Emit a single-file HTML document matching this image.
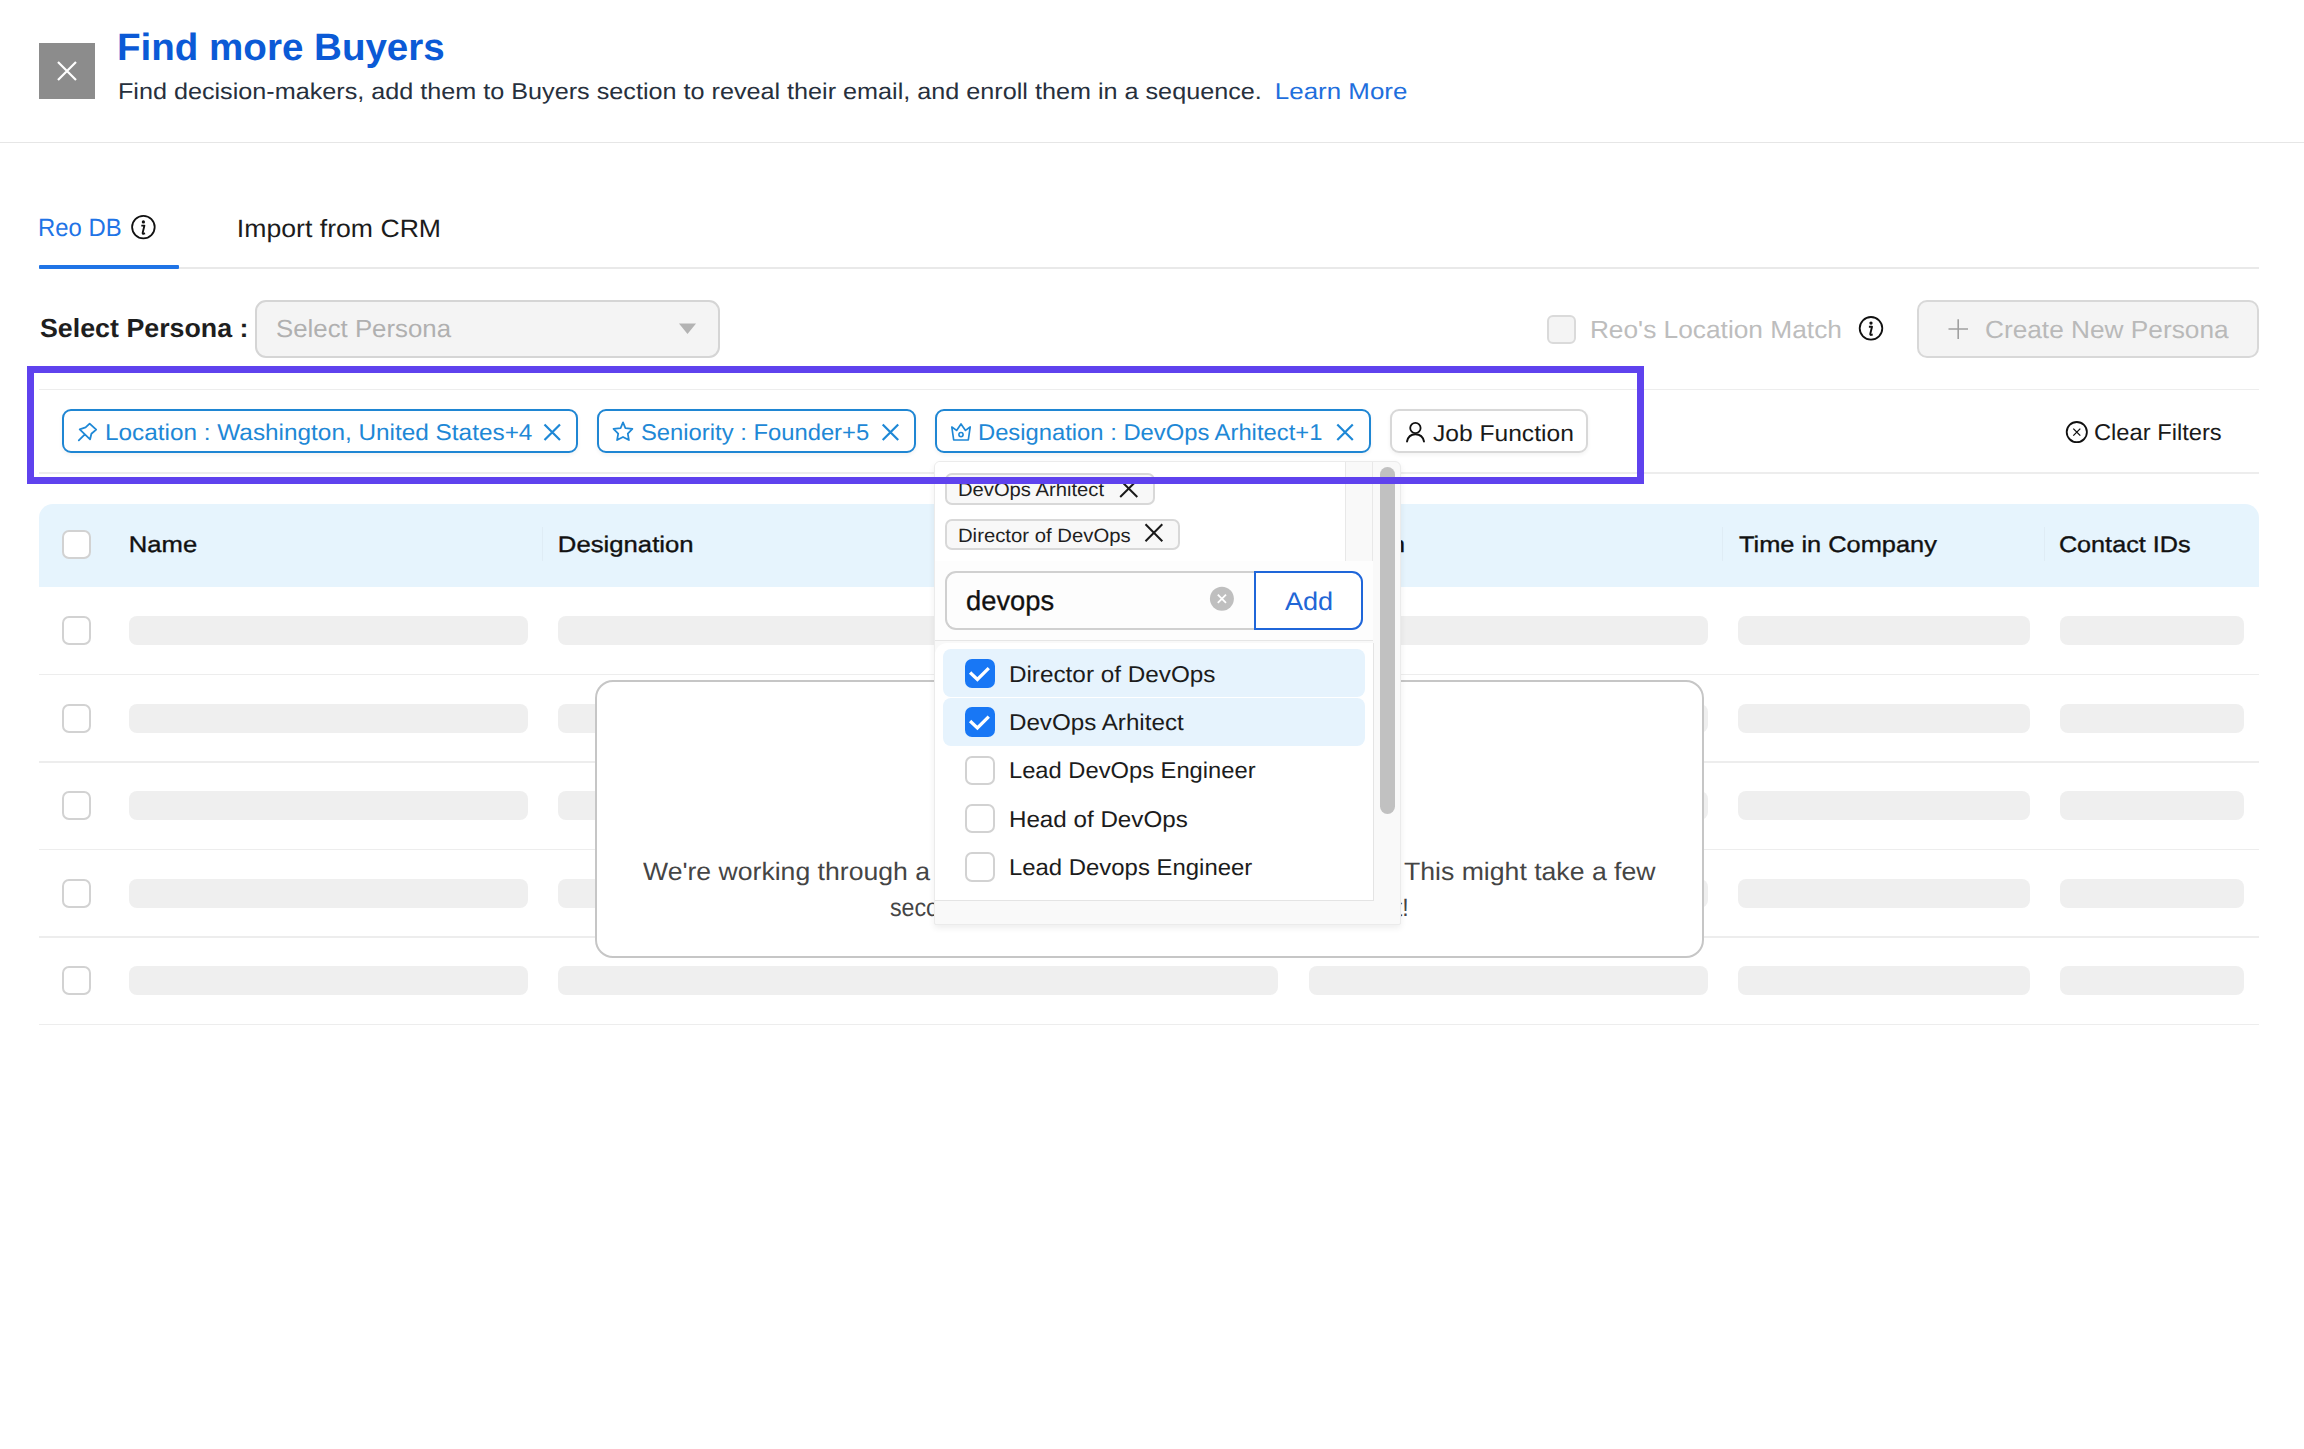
<!DOCTYPE html>
<html>
<head>
<meta charset="utf-8">
<style>
html,body{margin:0;padding:0;background:#ffffff;}
body{width:2304px;height:1449px;overflow:hidden;position:relative;font-family:"Liberation Sans",sans-serif;}
.a{position:absolute;box-sizing:border-box;}
.t{position:absolute;white-space:nowrap;font-family:"Liberation Sans",sans-serif;text-rendering:geometricPrecision;}
svg{position:absolute;overflow:visible;}
.sk{position:absolute;height:29px;border-radius:8px;background:#efefef;}
.cb{position:absolute;width:29px;height:29px;box-sizing:border-box;border:2px solid #d2d2d2;border-radius:7px;background:#fff;}
.rl{position:absolute;left:39px;width:2220px;height:2px;background:#ededed;}
.chip{position:absolute;top:409px;height:44px;box-sizing:border-box;border:2px solid #1f86d3;border-radius:9px;background:#fff;box-shadow:0 2px 4px rgba(0,0,0,0.05);}
</style>
</head>
<body>

<!-- ===== Header ===== -->
<div class="a" style="left:39px;top:43px;width:56px;height:56px;background:#8c8c8c;"></div>
<svg style="left:0;top:0" width="2304" height="120">
  <path d="M58 62 L76 80 M76 62 L58 80" stroke="#ffffff" stroke-width="2.2" fill="none"/>
</svg>
<div class="t" style="left:117.4px;top:29.0px;font-size:38px;line-height:38px;font-weight:700;color:#0b5ad6;transform-origin:2.00px 0;transform:scaleX(1.0146)">Find more Buyers</div>
<div class="t" style="left:117.7px;top:80.0px;font-size:22.75px;line-height:22.75px;font-weight:400;color:#27303d;transform-origin:1.00px 0;transform:scaleX(1.1072)">Find decision-makers, add them to Buyers section to reveal their email, and enroll them in a sequence.</div>
<div class="t" style="left:1275.4px;top:80.0px;font-size:22.75px;line-height:22.75px;font-weight:400;color:#1f6fdd;transform-origin:1.00px 0;transform:scaleX(1.1388)">Learn More</div>
<div class="a" style="left:0;top:141.5px;width:2304px;height:1.5px;background:#e6e6e6;"></div>

<!-- ===== Tabs ===== -->
<div class="t" style="left:38.1px;top:216.0px;font-size:25px;line-height:25px;font-weight:400;color:#1f74e6;transform-origin:2.00px 0;transform:scaleX(0.9545)">Reo DB</div>
<svg style="left:0;top:0" width="200" height="260">
  <g id="info">
  <circle cx="143.4" cy="227.1" r="11.3" stroke="#111" stroke-width="1.8" fill="none"/>
  <circle cx="143.4" cy="221.9" r="1.65" fill="#111"/>
  <path d="M141.3 225.6 H144.4 L142.7 232.6 Q142.4 233.9 143.7 233.7 L145.1 233.3" stroke="#111" stroke-width="1.9" fill="none" stroke-linejoin="round"/>
  </g>
</svg>
<div class="t" style="left:237.0px;top:217.0px;font-size:25px;line-height:25px;font-weight:400;color:#1c1c1c;transform-origin:2.00px 0;transform:scaleX(1.0652)">Import from CRM</div>
<div class="a" style="left:39px;top:267px;width:2220px;height:1.6px;background:#e9e9e9;"></div>
<div class="a" style="left:39px;top:265px;width:140px;height:4px;background:#1f74e6;border-radius:1px;"></div>

<!-- ===== Persona row ===== -->
<div class="t" style="left:40.2px;top:315.0px;font-size:26.25px;line-height:26.25px;font-weight:700;color:#1e1e1e;transform-origin:0.00px 0;transform:scaleX(1.0207)">Select Persona :</div>
<div class="a" style="left:254.5px;top:299.5px;width:465px;height:58.5px;background:#f4f4f4;border:2px solid #d5d5d5;border-radius:11px;"></div>
<div class="t" style="left:276.2px;top:318.0px;font-size:24.75px;line-height:24.75px;font-weight:400;color:#b0b0b0;transform-origin:1.00px 0;transform:scaleX(1.0432)">Select Persona</div>
<svg style="left:0;top:0" width="800" height="400">
  <polygon points="679,323.5 696,323.5 687.5,334" fill="#b3b3b3"/>
</svg>
<div class="a" style="left:1547px;top:315px;width:29px;height:29px;background:#f4f4f4;border:2px solid #dadada;border-radius:6px;"></div>
<div class="t" style="left:1590.3px;top:319.0px;font-size:24.75px;line-height:24.75px;font-weight:400;color:#bdbdbd;transform-origin:2.00px 0;transform:scaleX(1.0624)">Reo's Location Match</div>
<svg style="left:0;top:0" width="2304" height="400">
  <g transform="translate(1727.6,101.2)">
  <circle cx="143.4" cy="227.1" r="11.3" stroke="#111" stroke-width="1.8" fill="none"/>
  <circle cx="143.4" cy="221.9" r="1.65" fill="#111"/>
  <path d="M141.3 225.6 H144.4 L142.7 232.6 Q142.4 233.9 143.7 233.7 L145.1 233.3" stroke="#111" stroke-width="1.9" fill="none" stroke-linejoin="round"/>
  </g>
</svg>
<div class="a" style="left:1917px;top:299.5px;width:341.5px;height:58.5px;background:#f4f4f4;border:2px solid #d8d8d8;border-radius:10px;"></div>
<svg style="left:0;top:0" width="2304" height="400">
  <path d="M1948.5 329 H1968 M1958.2 319.2 V339" stroke="#a0a0a0" stroke-width="1.6" fill="none"/>
</svg>
<div class="t" style="left:1984.8px;top:319.0px;font-size:24.75px;line-height:24.75px;font-weight:400;color:#b9b9b9;transform-origin:1.00px 0;transform:scaleX(1.0608)">Create New Persona</div>

<!-- ===== Filter row ===== -->
<div class="rl" style="top:388.5px;height:1.5px;"></div>
<div class="rl" style="top:472px;height:1.5px;"></div>

<div class="chip" style="left:62px;width:516px;"></div>
<div class="chip" style="left:597px;width:319px;"></div>
<div class="chip" style="left:935px;width:435.5px;"></div>
<div class="chip" style="left:1390px;width:198px;border-color:#d8d8d8;"></div>

<svg style="left:0;top:0" width="2304" height="480">
  <!-- pin -->
  <path d="M89.65 423.6 L96.2 429.6 L91.4 433.8 L90.1 439.3 L79.7 429.3 L85.6 427.4 Z M84.6 434.6 L78.8 440.3" fill="none" stroke="#1e88d6" stroke-width="1.8" stroke-linejoin="round" stroke-linecap="round"/>
  <!-- X chip1 -->
  <path d="M544.5 424.5 L560 440 M560 424.5 L544.5 440" stroke="#1e88d6" stroke-width="2.2" fill="none"/>
  <!-- star -->
  <polygon points="623,422.4 625.4,428.1 632.4,428.9 627.8,433.6 628.9,440.1 623,436.9 617.1,440.1 618.2,433.6 613.5,428.9 620.6,428.1" fill="none" stroke="#1e88d6" stroke-width="1.75" stroke-linejoin="round"/>
  <!-- X chip2 -->
  <path d="M882.7 424.5 L898.2 440 M898.2 424.5 L882.7 440" stroke="#1e88d6" stroke-width="2.2" fill="none"/>
  <!-- crown -->
  <path d="M951.8 427 L956.6 430.4 L961 424 L965.5 430.4 L970.2 427 L968.3 440 L953.7 440 Z" fill="none" stroke="#1e88d6" stroke-width="1.7" stroke-linejoin="round"/>
  <circle cx="961" cy="434.6" r="2.1" fill="none" stroke="#1e88d6" stroke-width="1.6"/>
  <!-- X chip3 -->
  <path d="M1337.3 424.5 L1352.8 440 M1352.8 424.5 L1337.3 440" stroke="#1e88d6" stroke-width="2.2" fill="none"/>
  <!-- person -->
  <circle cx="1415.4" cy="428" r="5.2" fill="none" stroke="#111" stroke-width="1.8"/>
  <path d="M1407 441.5 C1408 436.5 1411 434.2 1415.4 434.2 C1419.8 434.2 1423 436.5 1424 441.5" fill="none" stroke="#111" stroke-width="1.9" stroke-linecap="round"/>
  <!-- clear filters icon -->
  <circle cx="2076.8" cy="432.1" r="10.1" fill="none" stroke="#111" stroke-width="1.8"/>
  <path d="M2073.3 428.6 L2080.3 435.6 M2080.3 428.6 L2073.3 435.6" stroke="#111" stroke-width="1.3" fill="none"/>
</svg>
<div class="t" style="left:104.9px;top:421.0px;font-size:22.75px;line-height:22.75px;font-weight:400;color:#1e88d6;transform-origin:1.00px 0;transform:scaleX(1.0702)">Location : Washington, United States+4</div>
<div class="t" style="left:640.5px;top:421.0px;font-size:22.75px;line-height:22.75px;font-weight:400;color:#1e88d6;transform-origin:1.00px 0;transform:scaleX(1.0462)">Seniority : Founder+5</div>
<div class="t" style="left:977.9px;top:421.0px;font-size:22.75px;line-height:22.75px;font-weight:400;color:#1e88d6;transform-origin:1.00px 0;transform:scaleX(1.0455)">Designation : DevOps Arhitect+1</div>
<div class="t" style="left:1433.2px;top:422.0px;font-size:22.75px;line-height:22.75px;font-weight:400;color:#1a1a1a;transform-origin:0.00px 0;transform:scaleX(1.0810)">Job Function</div>
<div class="t" style="left:2093.9px;top:421.0px;font-size:22.75px;line-height:22.75px;font-weight:400;color:#1a1a1a;transform-origin:1.00px 0;transform:scaleX(1.0417)">Clear Filters</div>

<!-- ===== Table ===== -->
<div class="a" style="left:39px;top:504px;width:2220px;height:83px;background:#e6f4fd;border-radius:14px 14px 0 0;"></div>
<div class="cb" style="left:62px;top:530px;"></div>
<div class="a" style="left:541.5px;top:527px;width:1.5px;height:34px;background:#dfecf5;"></div>
<div class="a" style="left:1292px;top:527px;width:1.5px;height:34px;background:#dfecf5;"></div>
<div class="a" style="left:1721.5px;top:527px;width:1.5px;height:34px;background:#dfecf5;"></div>
<div class="a" style="left:2043.5px;top:527px;width:1.5px;height:34px;background:#dfecf5;"></div>
<div class="t" style="left:128.6px;top:534.0px;font-size:22.5px;line-height:22.5px;font-weight:400;color:#111111;transform-origin:1.00px 0;transform:scaleX(1.1384);-webkit-text-stroke:0.35px #111111">Name</div>
<div class="t" style="left:557.5px;top:534.0px;font-size:22.5px;line-height:22.5px;font-weight:400;color:#111111;transform-origin:1.00px 0;transform:scaleX(1.1422);-webkit-text-stroke:0.35px #111111">Designation</div>
<div class="t" style="left:1307.5px;top:534.0px;font-size:22.5px;line-height:22.5px;font-weight:400;color:#111111;transform-origin:1.00px 0;transform:scaleX(1.1430);-webkit-text-stroke:0.35px #111111">Location</div>
<div class="t" style="left:1738.5px;top:534.0px;font-size:22.5px;line-height:22.5px;font-weight:400;color:#111111;transform-origin:0.00px 0;transform:scaleX(1.1275);-webkit-text-stroke:0.35px #111111">Time in Company</div>
<div class="t" style="left:2058.9px;top:534.0px;font-size:22.5px;line-height:22.5px;font-weight:400;color:#111111;transform-origin:1.00px 0;transform:scaleX(1.1204);-webkit-text-stroke:0.35px #111111">Contact IDs</div>

<div class="cb" style="left:62px;top:616.0px;"></div>
<div class="sk" style="left:129px;top:616.0px;width:399.0px;"></div>
<div class="sk" style="left:558px;top:616.0px;width:720.4px;"></div>
<div class="sk" style="left:1308.8px;top:616.0px;width:398.9px;"></div>
<div class="sk" style="left:1738px;top:616.0px;width:291.7px;"></div>
<div class="sk" style="left:2060px;top:616.0px;width:184.0px;"></div>
<div class="rl" style="top:673.5px;height:1.5px;"></div>
<div class="cb" style="left:62px;top:703.5px;"></div>
<div class="sk" style="left:129px;top:703.5px;width:399.0px;"></div>
<div class="sk" style="left:558px;top:703.5px;width:720.4px;"></div>
<div class="sk" style="left:1308.8px;top:703.5px;width:398.9px;"></div>
<div class="sk" style="left:1738px;top:703.5px;width:291.7px;"></div>
<div class="sk" style="left:2060px;top:703.5px;width:184.0px;"></div>
<div class="rl" style="top:761.0px;height:1.5px;"></div>
<div class="cb" style="left:62px;top:791.0px;"></div>
<div class="sk" style="left:129px;top:791.0px;width:399.0px;"></div>
<div class="sk" style="left:558px;top:791.0px;width:720.4px;"></div>
<div class="sk" style="left:1308.8px;top:791.0px;width:398.9px;"></div>
<div class="sk" style="left:1738px;top:791.0px;width:291.7px;"></div>
<div class="sk" style="left:2060px;top:791.0px;width:184.0px;"></div>
<div class="rl" style="top:848.5px;height:1.5px;"></div>
<div class="cb" style="left:62px;top:878.5px;"></div>
<div class="sk" style="left:129px;top:878.5px;width:399.0px;"></div>
<div class="sk" style="left:558px;top:878.5px;width:720.4px;"></div>
<div class="sk" style="left:1308.8px;top:878.5px;width:398.9px;"></div>
<div class="sk" style="left:1738px;top:878.5px;width:291.7px;"></div>
<div class="sk" style="left:2060px;top:878.5px;width:184.0px;"></div>
<div class="rl" style="top:936.0px;height:1.5px;"></div>
<div class="cb" style="left:62px;top:966.0px;"></div>
<div class="sk" style="left:129px;top:966.0px;width:399.0px;"></div>
<div class="sk" style="left:558px;top:966.0px;width:720.4px;"></div>
<div class="sk" style="left:1308.8px;top:966.0px;width:398.9px;"></div>
<div class="sk" style="left:1738px;top:966.0px;width:291.7px;"></div>
<div class="sk" style="left:2060px;top:966.0px;width:184.0px;"></div>
<div class="rl" style="top:1023.5px;height:1.5px;"></div>

<!-- ===== Modal ===== -->
<div class="a" style="left:594.5px;top:679.5px;width:1109.5px;height:278.5px;background:#fff;border:2px solid #c6c6c6;border-radius:18px;"></div>
<div class="t" style="left:643.0px;top:860.0px;font-size:25.25px;line-height:25.25px;font-weight:400;color:#454545;transform-origin:0.00px 0;transform:scaleX(1.0535)">We're working through a</div>
<div class="t" style="left:1403.5px;top:860.0px;font-size:25.25px;line-height:25.25px;font-weight:400;color:#454545;transform-origin:0.00px 0;transform:scaleX(1.0542)">This might take a few</div>
<div class="t" style="left:890.4px;top:896.0px;font-size:25.25px;line-height:25.25px;font-weight:400;color:#454545;transform-origin:0.00px 0;transform:scaleX(0.9192)">seconds to get the best buyers for you. Hang tight!</div>

<!-- ===== Dropdown ===== -->
<div class="a" style="left:934px;top:460.5px;width:467px;height:464.5px;background:#f9f9f9;border:1px solid #ebebeb;border-radius:6px 6px 2px 2px;box-shadow:0 3px 6px rgba(0,0,0,0.07);"></div>
<div class="a" style="left:935px;top:461.5px;width:410px;height:100px;background:#fff;border-radius:5px 0 0 0;"></div>
<div class="a" style="left:1345px;top:461.5px;width:27.5px;height:100px;background:#f9f9f9;border-left:1px solid #e8e8e8;border-right:1px solid #e8e8e8;"></div>
<div class="a" style="left:935px;top:561px;width:438px;height:79.5px;background:#fdfdfd;"></div>
<div class="a" style="left:935px;top:639.5px;width:438px;height:1.5px;background:#e6e6e6;"></div>
<div class="a" style="left:935px;top:643px;width:439px;height:257.5px;background:#fff;border-right:1.5px solid #e4e4e4;border-bottom:1.5px solid #e4e4e4;border-radius:12px 0 0 0;"></div>
<div class="a" style="left:1380px;top:466.5px;width:15px;height:347px;background:#c1c1c1;border-radius:7.5px;"></div>

<!-- tags -->
<div class="a" style="left:945px;top:473px;width:210px;height:31.5px;background:#f8f8f8;border:2px solid #d8d8d8;border-radius:7px;"></div>
<div class="a" style="left:945px;top:519px;width:235px;height:30.5px;background:#f8f8f8;border:2px solid #d8d8d8;border-radius:7px;"></div>
<div class="t" style="left:958.4px;top:481.0px;font-size:19.25px;line-height:19.25px;font-weight:400;color:#1f1f1f;transform-origin:1.00px 0;transform:scaleX(1.0501)">DevOps Arhitect</div>
<div class="t" style="left:958.4px;top:527.0px;font-size:19.25px;line-height:19.25px;font-weight:400;color:#1f1f1f;transform-origin:1.00px 0;transform:scaleX(1.0552)">Director of DevOps</div>
<svg style="left:0;top:0" width="2304" height="960">
  <path d="M1120.2 480 L1137.3 497 M1137.3 480 L1120.2 497" stroke="#1a1a1a" stroke-width="2" fill="none"/>
  <path d="M1145.5 524.3 L1162.3 541.2 M1162.3 524.3 L1145.5 541.2" stroke="#1a1a1a" stroke-width="2" fill="none"/>
</svg>

<!-- input -->
<div class="a" style="left:944.5px;top:571px;width:312px;height:59px;background:#fdfdfd;border:2px solid #d0d0d0;border-right:none;border-radius:11px 0 0 11px;"></div>
<div class="a" style="left:1254px;top:571px;width:109px;height:59px;background:#fff;border:2px solid #1f66d9;border-radius:0 11px 11px 0;"></div>
<div class="t" style="left:965.7px;top:587.0px;font-size:27.5px;line-height:27.5px;font-weight:400;color:#111111;transform-origin:1.00px 0;transform:scaleX(0.9928);-webkit-text-stroke:0.30px #111111">devops</div>
<div class="t" style="left:1285.4px;top:590.0px;font-size:25.5px;line-height:25.5px;font-weight:400;color:#2166d6;transform-origin:0.00px 0;transform:scaleX(1.0613)">Add</div>
<svg style="left:0;top:0" width="2304" height="960">
  <circle cx="1221.9" cy="598.8" r="12" fill="#bfbfbf"/>
  <path d="M1217.8 594.7 L1226 602.9 M1226 594.7 L1217.8 602.9" stroke="#fff" stroke-width="1.8" fill="none"/>
</svg>

<!-- list -->
<div class="a" style="left:943px;top:649.3px;width:422px;height:48.2px;background:#e6f3fd;border-radius:8px;"></div>
<div class="a" style="left:943px;top:697.5px;width:422px;height:48.2px;background:#e6f3fd;border-radius:8px;"></div>
<div class="a" style="left:965px;top:658.5px;width:29.5px;height:29.5px;background:#1877f5;border-radius:7px;"></div>
<div class="a" style="left:965px;top:707px;width:29.5px;height:29.5px;background:#1877f5;border-radius:7px;"></div>
<div class="cb" style="left:965px;top:755.5px;width:29.5px;height:29.5px;"></div>
<div class="cb" style="left:965px;top:803.8px;width:29.5px;height:29.5px;"></div>
<div class="cb" style="left:965px;top:852.1px;width:29.5px;height:29.5px;"></div>
<svg style="left:0;top:0" width="2304" height="960">
  <path d="M971.3 673.6 L977.4 679.5 L987.6 669.3" stroke="#fff" stroke-width="3.3" fill="none" stroke-linecap="square"/>
  <path d="M971.3 722.1 L977.4 728 L987.6 717.8" stroke="#fff" stroke-width="3.3" fill="none" stroke-linecap="square"/>
</svg>
<div class="t" style="left:1009.0px;top:663.0px;font-size:22.75px;line-height:22.75px;font-weight:400;color:#1c1c1c;transform-origin:1.00px 0;transform:scaleX(1.0679)">Director of DevOps</div>
<div class="t" style="left:1009.0px;top:711.0px;font-size:22.75px;line-height:22.75px;font-weight:400;color:#1c1c1c;transform-origin:1.00px 0;transform:scaleX(1.0635)">DevOps Arhitect</div>
<div class="t" style="left:1009.0px;top:759.0px;font-size:22.75px;line-height:22.75px;font-weight:400;color:#1c1c1c;transform-origin:1.00px 0;transform:scaleX(1.0427)">Lead DevOps Engineer</div>
<div class="t" style="left:1009.0px;top:808.0px;font-size:22.75px;line-height:22.75px;font-weight:400;color:#1c1c1c;transform-origin:1.00px 0;transform:scaleX(1.0635)">Head of DevOps</div>
<div class="t" style="left:1009.0px;top:856.0px;font-size:22.75px;line-height:22.75px;font-weight:400;color:#1c1c1c;transform-origin:1.00px 0;transform:scaleX(1.0512)">Lead Devops Engineer</div>

<!-- ===== Highlight box ===== -->
<div class="a" style="left:27px;top:365.5px;width:1617px;height:118.8px;border:7.2px solid #5f42ee;"></div>

</body>
</html>
